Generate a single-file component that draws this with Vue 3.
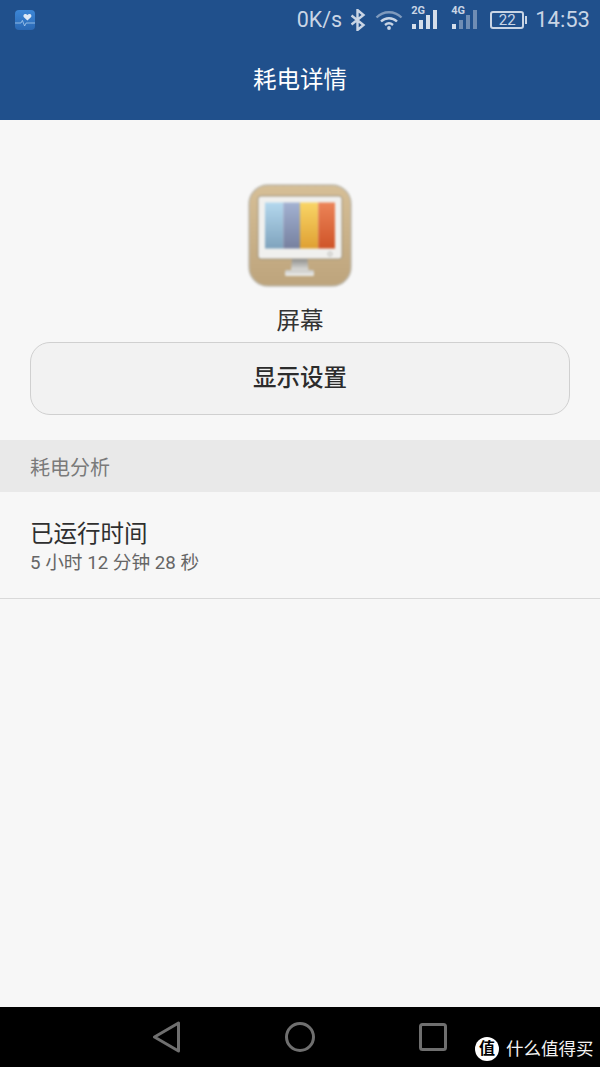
<template>
  <div class="page">
    <header class="top">
      <div class="status">
        <svg class="app-icon" width="20" height="20" viewBox="0 0 20 20">
          <defs>
            <linearGradient id="appBg" x1="0" y1="0" x2="0" y2="1">
              <stop offset="0" stop-color="#3c86d6" />
              <stop offset="1" stop-color="#2a68b4" />
            </linearGradient>
          </defs>
          <rect width="20" height="20" rx="4" fill="url(#appBg)" />
          <path d="M12.4 10.6 8.9 7.2C7.7 5.9 8.600 3.900 10.300 3.900c.9 0 1.600.5 2.100 1.200.5-.7 1.200-1.200 2.100-1.200 1.700 0 2.600 2 1.400 3.300z" fill="#dfe9f5" />
          <path d="M0 13h6l1.400-2.600L9.600 16l1.500-3H20" fill="none" stroke="#a9cbee" stroke-width=".8" />
        </svg>
        <div class="status-right">
          <span class="speed">0K/s</span>
          <svg class="bt" width="18" height="22" viewBox="0 0 18 22" fill="none" stroke="#c9d5e5" stroke-width="2.400">
            <path d="M2.500 6.500 14.500 16 8.500 21V1l6 5L2.500 15.500" />
          </svg>
          <svg class="wifi" width="28" height="20" viewBox="0 0 28 20" fill="none">
            <path d="M1.500 7.500C8.500 .5 19.500 .5 26.500 7.500" stroke="#7f9abd" stroke-width="2.400" />
            <path d="M6 11.500c4.500-4.300 11.500-4.300 16 0" stroke="#c9d5e5" stroke-width="2.400" />
            <path d="M10 15c2.400-2 5.600-2 8 0" stroke="#c9d5e5" stroke-width="2.400" />
            <circle cx="14" cy="18" r="1.900" fill="#c9d5e5" />
          </svg>
          <div class="signal first">
            <span class="net">2G</span>
            <div class="bars">
              <i v-for="b in strong" :key="b" class="bar" :style="{ height: b + 'px' }"></i>
            </div>
          </div>
          <div class="signal second">
            <span class="net">4G</span>
            <div class="bars">
              <i class="bar" style="height: 5px"></i>
              <i v-for="b in weak" :key="b" class="bar dim" :style="{ height: b + 'px' }"></i>
            </div>
          </div>
          <div class="battery"><span>22</span></div>
          <span class="clock">14:53</span>
        </div>
      </div>
      <h1 class="title">耗电详情</h1>
    </header>

    <main class="content">
      <div class="hero">
        <svg class="screen-icon" width="104" height="104" viewBox="0 0 104 104">
          <defs>
            <linearGradient id="tan" x1="0" y1="0" x2="0" y2="1">
              <stop offset="0" stop-color="#d6bf97" />
              <stop offset="1" stop-color="#bda47c" />
            </linearGradient>
            <linearGradient id="c1" x1="0" y1="0" x2="0" y2="1">
              <stop offset="0" stop-color="#b4d8ee" />
              <stop offset="1" stop-color="#7fa3bd" />
            </linearGradient>
            <linearGradient id="c2" x1="0" y1="0" x2="0" y2="1">
              <stop offset="0" stop-color="#a3b2d2" />
              <stop offset="1" stop-color="#76809f" />
            </linearGradient>
            <linearGradient id="c3" x1="0" y1="0" x2="0" y2="1">
              <stop offset="0" stop-color="#f9d566" />
              <stop offset="1" stop-color="#dfa033" />
            </linearGradient>
            <linearGradient id="c4" x1="0" y1="0" x2="0" y2="1">
              <stop offset="0" stop-color="#ec8458" />
              <stop offset="1" stop-color="#cf5428" />
            </linearGradient>
            <linearGradient id="stand" x1="0" y1="0" x2="0" y2="1">
              <stop offset="0" stop-color="#8f8f8c" />
              <stop offset="1" stop-color="#dcdcd9" />
            </linearGradient>
            <linearGradient id="base" x1="0" y1="0" x2="0" y2="1">
              <stop offset="0" stop-color="#c9c9c6" />
              <stop offset="1" stop-color="#efefec" />
            </linearGradient>
          </defs>
          <rect x="1" y="1" width="102" height="101" rx="19" fill="url(#tan)" stroke="#bdb8ac" stroke-width="1.500" />
          <rect x="10" y="12" width="84" height="63" rx="3" fill="#f0f0ee" stroke="#8f8672" stroke-width=".8" />
          <rect x="17" y="18.500" width="18.300" height="46" fill="url(#c1)" />
          <rect x="35.300" y="18.500" width="16.700" height="46" fill="url(#c2)" />
          <rect x="52" y="18.500" width="18.300" height="46" fill="url(#c3)" />
          <rect x="70.300" y="18.500" width="16.700" height="46" fill="url(#c4)" />
          <circle cx="82" cy="70" r="2" fill="none" stroke="#b5b5b2" />
          <path d="M44 75h15.500l1 11H43z" fill="url(#stand)" />
          <rect x="37" y="86" width="29" height="6" rx="1.500" fill="url(#base)" />
        </svg>
        <div class="hero-name">屏幕</div>
      </div>
      <div class="btn-wrap">
        <button class="action">显示设置</button>
      </div>
      <div class="section">耗电分析</div>
      <div class="row">
        <div class="row-title">已运行时间</div>
        <div class="row-sub">5 小时 12 分钟 28 秒</div>
      </div>
    </main>

    <footer class="nav">
      <svg width="30" height="32" viewBox="0 0 30 32" fill="none" stroke="#6f6f6f" stroke-width="3" stroke-linejoin="round">
        <path d="M25.500 2v28L1.500 16z" />
      </svg>
      <svg width="30" height="30" viewBox="0 0 30 30" fill="none" stroke="#6f6f6f" stroke-width="3">
        <circle cx="15" cy="15" r="13.500" />
      </svg>
      <svg class="square" width="28" height="28" viewBox="0 0 28 28" fill="none" stroke="#6f6f6f" stroke-width="3">
        <rect x="1.500" y="1.500" width="25" height="25" rx="2" />
      </svg>
      <div class="mark">
        <span class="mark-badge">值</span>
        <span>什么值得买</span>
      </div>
    </footer>
  </div>
</template>

<script setup>
const strong = [5, 9, 14, 19]
const weak = [9, 14, 19]
</script>

<style>
html,
body {
  margin: 0;
  background: #f7f7f7;
}
</style>

<style scoped>
.page {
  width: 600px;
  height: 1067px;
  display: flex;
  flex-direction: column;
  overflow: hidden;
  font-family: Roboto, "Noto Sans CJK SC", sans-serif;
  background: #f7f7f7;
}
.top {
  height: 120px;
  background: #20508c;
  flex: none;
}
.status {
  height: 40px;
  display: flex;
  align-items: center;
  justify-content: space-between;
  padding: 0 10px 0 15px;
}
.status-right {
  display: flex;
  align-items: center;
  color: #c9d5e5;
}
.speed,
.clock {
  font-size: 21.500px;
  line-height: 40px;
}
.clock {
  font-size: 22px;
  margin-left: 10px;
}
.bt {
  margin-left: 7px;
}
.wifi {
  margin-left: 8px;
}
.signal {
  position: relative;
  width: 27px;
  height: 30px;
}
.signal.first {
  margin-left: 8px;
}
.signal.second {
  margin-left: 13px;
}
.net {
  position: absolute;
  left: 0;
  top: 0;
  font-size: 11px;
  line-height: 12px;
  font-weight: 700;
}
.bars {
  position: absolute;
  right: 1px;
  bottom: 6px;
  display: flex;
  align-items: flex-end;
  gap: 3px;
}
.bar {
  width: 4px;
  background: #d5deea;
}
.bar.dim {
  background: #6f8db4;
}
.battery {
  position: relative;
  width: 34px;
  height: 18px;
  box-sizing: border-box;
  border: 2px solid #c9d5e5;
  border-radius: 3px;
  margin-left: 12px;
  margin-right: 1px;
  text-align: center;
  font-size: 15px;
  line-height: 14px;
}
.battery::after {
  content: "";
  position: absolute;
  right: -5px;
  top: 3px;
  width: 2px;
  height: 8px;
  background: #c9d5e5;
}
.title {
  margin: 0;
  height: 80px;
  line-height: 80px;
  text-align: center;
  color: #fff;
  font-size: 23.500px;
  font-weight: 400;
}
.content {
  flex: 1;
}
.hero {
  padding-top: 64px;
  display: flex;
  flex-direction: column;
  align-items: center;
}
.screen-icon {
  display: block;
  filter: blur(0.8px);
}
.hero-name {
  margin-top: 16px;
  font-size: 23.500px;
  line-height: 34px;
  color: #333;
}
.btn-wrap {
  padding: 4px 30px 0;
}
.action {
  display: block;
  width: 100%;
  height: 73px;
  box-sizing: border-box;
  padding: 0 0 6px;
  border: 1px solid #d0d0d0;
  border-radius: 20px;
  background: #f2f2f2;
  color: #2c2c2c;
  font-family: inherit;
  font-size: 23.500px;
  font-weight: 500;
}
.section {
  margin-top: 25px;
  height: 52px;
  line-height: 56px;
  padding-left: 30px;
  background: #e9e9e9;
  color: #7a7a7a;
  font-size: 20px;
}
.row {
  height: 107px;
  box-sizing: border-box;
  padding: 27px 30px 0;
  border-bottom: 1px solid #d9d9d9;
}
.row-title {
  font-size: 23.500px;
  line-height: 30px;
  color: #2f2f2f;
}
.row-sub {
  font-size: 18.700px;
  line-height: 28px;
  color: #666;
}
.nav {
  position: relative;
  height: 60px;
  flex: none;
  background: #000;
  display: flex;
  align-items: center;
  padding-left: 153px;
  gap: 102px;
}
.square {
  margin-left: 2px;
}
.mark {
  position: absolute;
  left: 475px;
  top: 30px;
  display: flex;
  align-items: center;
  gap: 7px;
  color: #f2f2f2;
  font-size: 17.500px;
  line-height: 24px;
}
.mark-badge {
  width: 24px;
  height: 24px;
  border-radius: 50%;
  background: #fff;
  color: #000;
  font-size: 16px;
  line-height: 24px;
  text-align: center;
  font-weight: 700;
}
</style>
